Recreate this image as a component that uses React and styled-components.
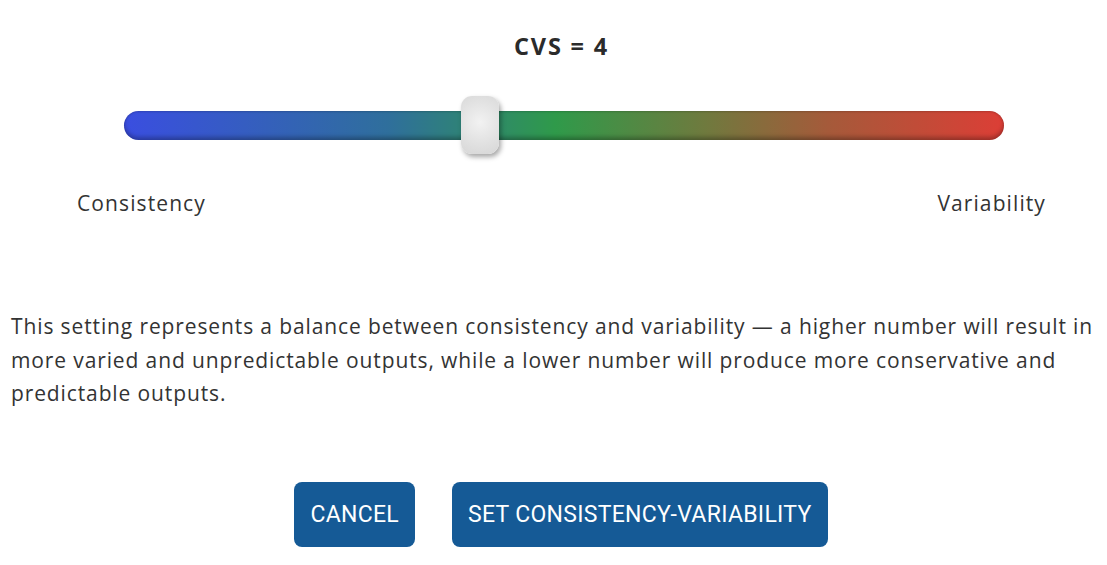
import React, { useState } from "react"
import styled, { createGlobalStyle } from "styled-components"

const GlobalStyle = createGlobalStyle`
  html, body {
    margin: 0;
    padding: 0;
    background: #fff;
  }
  body {
    font-family: "Open Sans", "Noto Sans", sans-serif;
    color: #333;
  }
`

const Page = styled.div`
  box-sizing: border-box;
  width: 1107px;
  padding: 34px 0 0 11px;
`

const Title = styled.h2`
  margin: 0;
  padding-left: 5px;
  text-align: center;
  font-size: 23.5px;
  line-height: 24px;
  font-weight: 700;
  letter-spacing: 1.8px;
  color: #2b2b2b;
`

const SliderWrap = styled.div`
  margin: 38px 103px 0 113px;
`

const Range = styled.input`
  -webkit-appearance: none;
  appearance: none;
  display: block;
  width: 100%;
  height: 58px;
  margin: 0;
  background: transparent;
  outline: none;

  &::-webkit-slider-runnable-track {
    height: 29px;
    border-radius: 15px;
    background: linear-gradient(to right, #3a4ee0 0%, #2f6f9c 30%, #2f9a4a 49%, #6f7a3e 66%, #a55a3a 80%, #dc3e36 100%);
    box-shadow: inset 0 -3px 4px rgba(0, 0, 0, 0.28), inset 0 1px 2px rgba(0, 0, 0, 0.15);
  }

  &::-webkit-slider-thumb {
    -webkit-appearance: none;
    appearance: none;
    width: 38px;
    height: 58px;
    margin-top: -14.5px;
    border-radius: 11px;
    background: radial-gradient(circle at 50% 45%, #f2f2f2 0%, #e2e2e2 55%, #d6d6d6 100%);
    box-shadow: 2px 3px 5px rgba(0, 0, 0, 0.35);
    cursor: pointer;
  }
`

const Ends = styled.div`
  display: flex;
  justify-content: space-between;
  margin: 37px 61px 0 66px;
  font-size: 21px;
  line-height: 24px;
  letter-spacing: 1.1px;
  color: #333;
`

const Note = styled.p`
  margin: 95px 0 0;
  font-size: 21px;
  line-height: 33.5px;
  letter-spacing: 0.88px;
  color: #333;
`

const Actions = styled.div`
  display: flex;
  justify-content: center;
  gap: 37px;
  margin-top: 71px;
  padding-left: 4px;
`

const Button = styled.button`
  height: 65px;
  padding: 0 16px;
  border: none;
  border-radius: 8px;
  background: #155a96;
  color: #fff;
  font-family: Roboto, "Liberation Sans", sans-serif;
  font-size: 23px;
  letter-spacing: 0.3px;
  text-transform: uppercase;
  cursor: pointer;
`

export default function App() {
  const [value, setValue] = useState(4)
  return (
    <Page>
      <GlobalStyle />
      <Title>CVS = {value}</Title>
      <SliderWrap>
        <Range
          type='range'
          min={0}
          max={10}
          step={1}
          value={value}
          onChange={e => setValue(Number(e.target.value))}
        />
      </SliderWrap>
      <Ends>
        <span>Consistency</span>
        <span>Variability</span>
      </Ends>
      <Note>
        This setting represents a balance between consistency and variability — a higher number will result in
        more varied and unpredictable outputs, while a lower number will produce more conservative and
        predictable outputs.
      </Note>
      <Actions>
        <Button>Cancel</Button>
        <Button>Set Consistency-Variability</Button>
      </Actions>
    </Page>
  )
}
